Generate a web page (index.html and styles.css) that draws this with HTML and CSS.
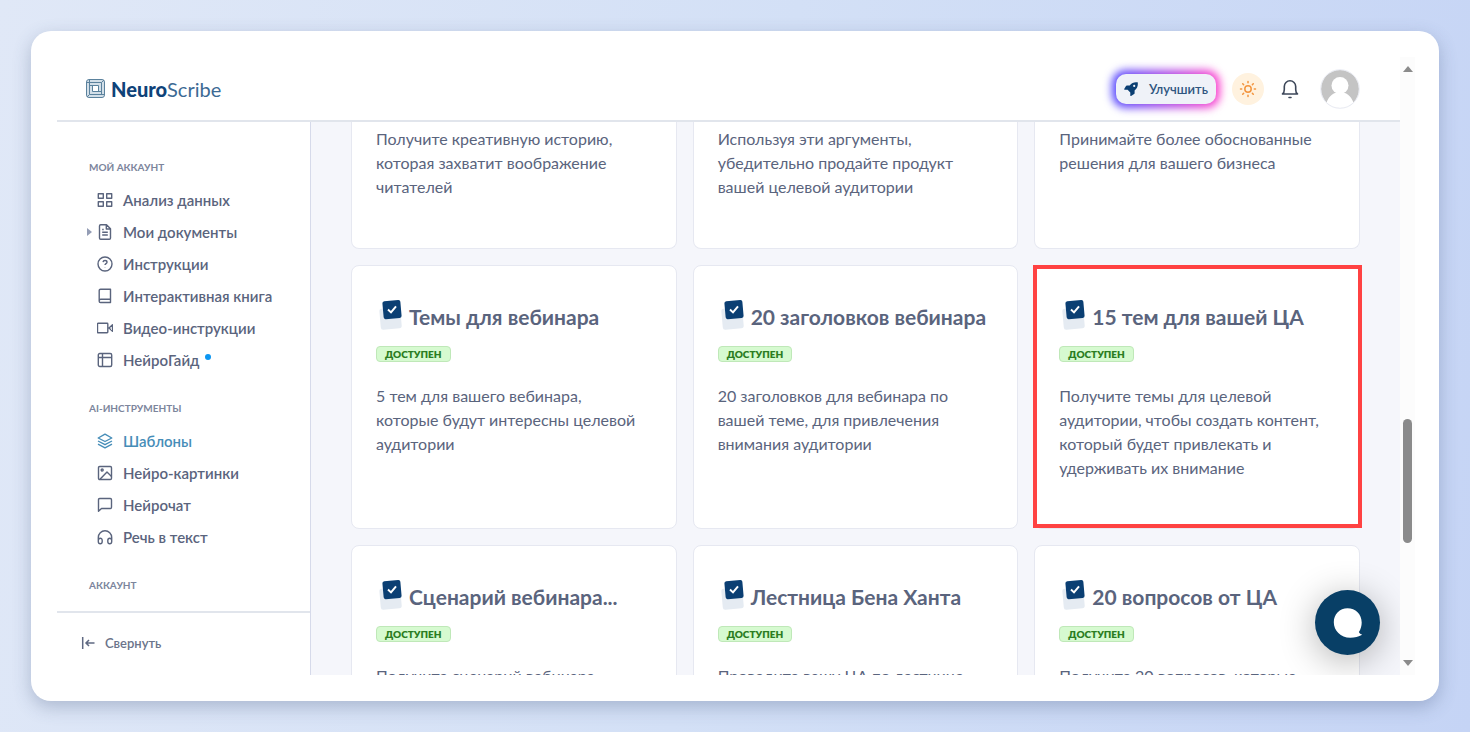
FILE: index.html
```html
<!DOCTYPE html>
<html lang="ru">
<head>
<meta charset="utf-8">
<title>NeuroScribe</title>
<link rel="stylesheet" href="styles.css">
</head>
<body>
<svg class="sprite" aria-hidden="true">
  <symbol id="tick" viewBox="0 0 24 32">
    <rect x="1" y="10" width="21" height="21" rx="2.5" fill="#e5ebf2" transform="rotate(-5 12 20)"/>
    <rect x="4" y="2.600" width="18" height="18" rx="2" fill="#0b3f73" transform="rotate(-5 13 11.600)"/>
    <path d="M9 11.600l3 2.800 5-6" fill="none" stroke="#fff" stroke-width="2"/>
  </symbol>
</svg>
<div class="window">
  <div class="app">
    <header class="header">
      <a class="logo" href="#">
        <svg class="logo-mark" viewBox="0 0 19 19" fill="none" stroke="#5b829d">
          <rect x=".5" y=".5" width="18" height="18" rx="2.500" fill="#d3dfe8"/>
          <path d="M3.500 1v14.500H18M1 3.500h14.500V15M6.500 6v6.500h9M4 6.500h8.500v6M1 18l2.500-2.500M15.500 3.500L18 1"/>
          <rect x="7" y="7" width="5" height="5" fill="#fff" stroke="none"/>
        </svg>
        <span><b>Neuro</b>Scribe</span>
      </a>
      <div class="actions">
        <button class="upgrade" type="button">
          <svg viewBox="0 0 14 14" width="14" height="14" fill="#0b3f73"><path d="M13.700.3C10.500-.2 7.800.6 5.700 3.500H2.900c-.4 0-.7.200-.9.500L.2 7c-.2.500 0 .8.500.8h2.900l2.700 2.700v2.900c0 .5.400.7.800.5l3-1.800c.3-.2.500-.5.500-.9V8.400C13.400 6.200 14.200 3.500 13.700.3zM10.200 5a1.100 1.100 0 110-2.200 1.100 1.100 0 010 2.200z"/></svg>
          Улучшить
        </button>
        <button class="theme" type="button" aria-label="Тема">
          <svg viewBox="0 0 18 18" width="18" height="18" fill="none" stroke="#f3953f" stroke-width="1.500" stroke-linecap="round"><circle cx="9" cy="9" r="3.200"/><path d="M9 1.500v1.200M9 15.300v1.200M1.500 9h1.200M15.300 9h1.200M3.700 3.700l.9.900M13.400 13.400l.9.900M3.700 14.300l.9-.9M13.400 4.600l.9-.9"/></svg>
        </button>
        <button class="bell" type="button" aria-label="Уведомления">
          <svg viewBox="0 0 18 20" width="18" height="20" fill="none" stroke="#3d4759" stroke-width="1.600" stroke-linecap="round" stroke-linejoin="round"><path d="M1.500 15h15c-1.400-1-1.800-2.500-1.800-4.500V7.500a5.700 5.700 0 00-11.400 0v3c0 2-.4 3.500-1.800 4.500zM8 18.500h2"/></svg>
        </button>
        <button class="avatar" type="button" aria-label="Профиль">
          <svg viewBox="0 0 40 40" width="40" height="40"><circle cx="20" cy="20" r="19" fill="#c4c4c4"/><circle cx="20" cy="16.500" r="8.500" fill="#fff"/><path d="M6.500 33.500C9 27 14 23 20 23s11 4 13.500 10.500A19 19 0 0120 39 19 19 0 016.500 33.500z" fill="#fff"/><circle cx="20" cy="20" r="19.300" fill="none" stroke="#e9ebf3"/></svg>
        </button>
      </div>
    </header>
    <div class="body">
      <aside class="sidebar">
        <nav class="nav">
          <section class="group">
            <h2>МОЙ АККАУНТ</h2>
            <a href="#"><svg viewBox="0 0 16 16"><path d="M1.300 1.700h5v4.600h-5zM9.700 1.700h5v4.600h-5zM1.300 9.700h5v4.600h-5zM9.700 9.700h5v4.600h-5z"/></svg>Анализ данных</a>
            <a class="has-children" href="#"><svg viewBox="0 0 16 16"><path d="M9.500.8H3.700c-.8 0-1.200.5-1.200 1.200v12c0 .8.500 1.200 1.200 1.200h8.600c.8 0 1.200-.5 1.200-1.200V4.800zM9.300 1v4h4M5.200 5.500h1.500M5.200 8.200h5.600M5.200 11h5.600"/></svg>Мои документы</a>
            <a href="#"><svg viewBox="0 0 16 16"><circle cx="8" cy="8" r="7"/><path d="M6 6.200c.2-1.200 1-1.700 2-1.700s2 .7 2 1.700c0 1.400-2 1.500-2 2.900M8 11.300v.2"/></svg>Инструкции</a>
            <a href="#"><svg viewBox="0 0 16 16"><path d="M3.500 1.200h10v13.300h-10c-.7 0-1.300-.6-1.300-1.300V2.500c0-.7.600-1.300 1.300-1.300zM2.200 13c0-1 .6-1.700 1.500-1.700h9.800"/></svg>Интерактивная книга</a>
            <a href="#"><svg viewBox="0 0 16 16"><path d="M1.300 3.200h8.800c.5 0 .7.200.7.700v8.200c0 .5-.2.700-.7.700H1.300c-.5 0-.8-.2-.8-.7V3.900c0-.5.300-.7.800-.7zM15.500 4.800L12 8l3.500 3.200z"/></svg>Видео-инструкции</a>
            <a href="#"><svg viewBox="0 0 16 16"><rect x="1.300" y="1.500" width="13.400" height="13" rx="1.500"/><path d="M1.500 5.500h13M5.500 1.500v13"/></svg>НейроГайд<i class="dot"></i></a>
          </section>
          <section class="group">
            <h2>AI-ИНСТРУМЕНТЫ</h2>
            <a class="active" href="#"><svg viewBox="0 0 16 16"><path d="M8 1.200L14.800 5 8 8.500 1.200 5zM1 8l7 3.700L15 8M1 11.200l7 3.600 7-3.600"/></svg>Шаблоны</a>
            <a href="#"><svg viewBox="0 0 16 16"><rect x="1.500" y="1.500" width="13" height="13" rx="1.200"/><circle cx="5.200" cy="5" r="1"/><path d="M3 14.300l7-7.300 4.500 4.500"/></svg>Нейро-картинки</a>
            <a href="#"><svg viewBox="0 0 16 16"><path d="M2.700 1.500h10.600c.7 0 1.200.5 1.200 1.200v7.600c0 .7-.5 1.200-1.200 1.200H4.500l-3 2.700V2.700c0-.7.500-1.200 1.200-1.200z"/></svg>Нейрочат</a>
            <a href="#"><svg viewBox="0 0 16 16"><path d="M1.300 12V8.500a6.700 6.700 0 0113.400 0V12M1.300 11.500c0-3 3.900-3 3.900 0v1c0 3-3.900 3-3.900 0zM14.700 11.500c0-3-3.900-3-3.900 0v1c0 3 3.900 3 3.900 0z"/></svg>Речь в текст</a>
          </section>
          <section class="group">
            <h2>АККАУНТ</h2>
          </section>
        </nav>
        <button class="collapse" type="button">
          <svg viewBox="0 0 14 12" width="14" height="12" fill="none" stroke="#5f6982" stroke-width="1.500"><path d="M1.700 0v12M13.500 6H5M8 3L5 6l3 3"/></svg>
          Свернуть
        </button>
      </aside>
      <main class="main">
        <div class="grid">
          <article class="card scrolled"><p>Получите креативную историю,<br>которая захватит воображение<br>читателей</p></article>
          <article class="card scrolled"><p>Используя эти аргументы,<br>убедительно продайте продукт<br>вашей целевой аудитории</p></article>
          <article class="card scrolled"><p>Принимайте более обоснованные<br>решения для вашего бизнеса</p></article>

          <article class="card"><h3><svg><use href="#tick"/></svg>Темы для вебинара</h3><span class="badge">ДОСТУПЕН</span><p>5 тем для вашего вебинара,<br>которые будут интересны целевой<br>аудитории</p></article>
          <article class="card"><h3><svg><use href="#tick"/></svg>20 заголовков вебинара</h3><span class="badge">ДОСТУПЕН</span><p>20 заголовков для вебинара по<br>вашей теме, для привлечения<br>внимания аудитории</p></article>
          <article class="card marked"><h3><svg><use href="#tick"/></svg>15 тем для вашей ЦА</h3><span class="badge">ДОСТУПЕН</span><p>Получите темы для целевой<br>аудитории, чтобы создать контент,<br>который будет привлекать и<br>удерживать их внимание</p></article>

          <article class="card"><h3><svg><use href="#tick"/></svg>Сценарий вебинара...</h3><span class="badge">ДОСТУПЕН</span><p>Получите сценарий вебинара</p></article>
          <article class="card"><h3><svg><use href="#tick"/></svg>Лестница Бена Ханта</h3><span class="badge">ДОСТУПЕН</span><p>Проведите вашу ЦА по лестнице</p></article>
          <article class="card"><h3><svg><use href="#tick"/></svg>20 вопросов от ЦА</h3><span class="badge">ДОСТУПЕН</span><p>Получите 20 вопросов, которые</p></article>
        </div>
        <button class="chat" type="button" aria-label="Чат">
          <svg viewBox="0 0 30 30" width="30" height="30" fill="#fff"><path d="M14.500.3C6.800.3.800 6.300.800 14.200c0 8.300 6.800 15.500 16.500 15.500 4.300 0 8.400-1 11.900-3-1.500-.4-2.700-1.300-3.300-2.700 1.800-2.600 2.800-6 2.800-9.500C28.700 6.200 22.500.3 14.500.3z"/></svg>
        </button>
      </main>
    </div>
  </div>
  <div class="scrollbar" aria-hidden="true">
    <svg viewBox="0 0 10 6" width="10" height="6" fill="#8b8b8b"><path d="M0 6l5-6 5 6z"/></svg>
    <div class="track"><div class="thumb"></div></div>
    <svg viewBox="0 0 10 6" width="10" height="6" fill="#8b8b8b"><path d="M0 0l5 6 5-6z"/></svg>
  </div>
</div>
</body>
</html>
```
FILE: styles.css
```css
* { box-sizing: border-box; }

body {
  margin: 0;
  height: 100vh;
  padding: 31px;
  background: linear-gradient(100deg, #e0e8f7, #d3e0f6 50%, #c5d4f5);
  font-family: Lato, "Noto Sans", sans-serif;
  color: #5a647d;
}

button {
  border: 0;
  padding: 0;
  background: none;
  font: inherit;
  color: inherit;
}

a { color: inherit; text-decoration: none; }

.sprite { position: absolute; width: 0; height: 0; }

.window {
  display: flex;
  height: 100%;
  padding: 26px 24px 26px 26px;
  border-radius: 20px;
  background: #fff;
  box-shadow: 0 6px 18px rgba(60, 80, 120, .3);
}

.app {
  flex: 1;
  min-width: 0;
  display: flex;
  flex-direction: column;
}

.header {
  display: flex;
  align-items: center;
  justify-content: space-between;
  height: 65px;
  padding: 0 40px 0 29px;
  border-bottom: 2px solid #e1e5ec;
}

.logo {
  display: flex;
  align-items: center;
  gap: 6px;
  font-size: 20px;
  line-height: 28px;
  color: #3c6a94;
}
.logo b { font-weight: 900; color: #0f4379; }
.logo-mark { width: 19px; height: 19px; }

.actions {
  position: relative;
  z-index: 0;
  display: flex;
  align-items: center;
}

.upgrade {
  position: relative;
  display: flex;
  align-items: center;
  gap: 11px;
  height: 30px;
  padding: 0 8px;
  border-radius: 10px;
  font-size: 13px;
  font-weight: 600;
  color: #2f5680;
}
.upgrade::before,
.upgrade::after {
  content: "";
  position: absolute;
  z-index: -1;
}
.upgrade::before {
  inset: -4px;
  border-radius: 14px;
  background: linear-gradient(90deg, #5048ff, #ff40cc);
  filter: blur(4px);
}
.upgrade::after {
  inset: 0;
  border-radius: 10px;
  background: #eff2f8;
}

.theme {
  display: grid;
  place-items: center;
  width: 32px;
  height: 32px;
  margin-left: 16px;
  border-radius: 50%;
  background: #fff2df;
}
.bell { display: grid; margin-left: 17px; }
.avatar { display: grid; margin-left: 21px; }

.body { flex: 1; display: flex; min-height: 0; }

.sidebar {
  display: flex;
  flex-direction: column;
  flex: 0 0 254px;
  border-right: 1px solid #d6daea;
}

.nav { flex: 1; min-height: 0; overflow: hidden; padding: 35px 10px 0 32px; }

.group { display: flex; flex-direction: column; margin-bottom: 22px; }
.group h2 {
  margin: 0 0 7px;
  font-size: 10px;
  line-height: 20px;
  font-weight: 700;
  color: #7c859c;
}
.group a {
  position: relative;
  display: flex;
  align-items: center;
  gap: 10px;
  padding-left: 8px;
  font-size: 15px;
  line-height: 32px;
  font-weight: 600;
  white-space: nowrap;
}
.group svg {
  width: 16px;
  height: 16px;
  fill: none;
  stroke: currentColor;
  stroke-width: 1.4;
  stroke-linejoin: round;
}
.group .active { color: #468db8; }

.has-children::before {
  content: "";
  position: absolute;
  left: -2px;
  border: 4px solid transparent;
  border-left: 5px solid #949db5;
  border-right: 0;
}

.dot {
  align-self: flex-start;
  width: 6px;
  height: 6px;
  margin: 10px 0 0 -4px;
  border-radius: 50%;
  background: #0c96f2;
}

.collapse {
  display: flex;
  align-items: center;
  gap: 10px;
  height: 64px;
  padding: 0 0 2px 24px;
  border-top: 2px solid #e1e5ec;
  font-size: 13px;
  font-weight: 600;
  color: #6b748a;
}

.main {
  position: relative;
  flex: 1;
  min-width: 0;
  overflow: hidden;
  background: #f5f6fb;
}

.grid {
  display: grid;
  grid-template-columns: repeat(3, 1fr);
  grid-template-rows: 127px;
  grid-auto-rows: 264px;
  gap: 16px;
  padding: 0 40px;
}

.card {
  position: relative;
  min-width: 0;
  padding: 32px 24px 24px;
  border: 1px solid #e6e8f1;
  border-radius: 8px;
  background: #fff;
}
.card h3 {
  display: flex;
  align-items: flex-start;
  gap: 6px;
  height: 48px;
  margin: 0;
  padding-left: 3px;
  font-size: 21px;
  line-height: 38px;
  font-weight: 700;
  white-space: nowrap;
}
.card h3 svg { width: 24px; height: 32px; }
.card p { margin: 0; font-size: 16px; line-height: 24px; white-space: nowrap; }

.badge {
  display: block;
  width: max-content;
  margin-bottom: 22px;
  padding: 0 8px;
  border: 1px solid #bfe8b8;
  border-radius: 4px;
  background: #d6fad0;
  font-size: 10px;
  line-height: 14px;
  font-weight: 800;
  color: #2b7d22;
}

.scrolled { padding-top: 5px; border-top: 0; border-radius: 0 0 8px 8px; }

.marked::after {
  content: "";
  position: absolute;
  inset: -1px -3px 0 -2px;
  border: 4px solid #ff4242;
}

.chat {
  position: absolute;
  right: 20px;
  bottom: 20px;
  display: grid;
  place-items: center;
  width: 65px;
  height: 65px;
  border-radius: 50%;
  background: #083f66;
  box-shadow: 0 6px 36px rgba(0, 0, 0, .3);
}

.scrollbar {
  display: flex;
  flex-direction: column;
  align-items: center;
  width: 15px;
  padding: 9px 0;
  background: #fcfcfc;
}
.track { flex: 1; display: flex; flex-direction: column; justify-content: center; padding-top: 230px; }
.thumb { width: 9px; height: 124px; border-radius: 5px; background: #8b8b8b; }
```
